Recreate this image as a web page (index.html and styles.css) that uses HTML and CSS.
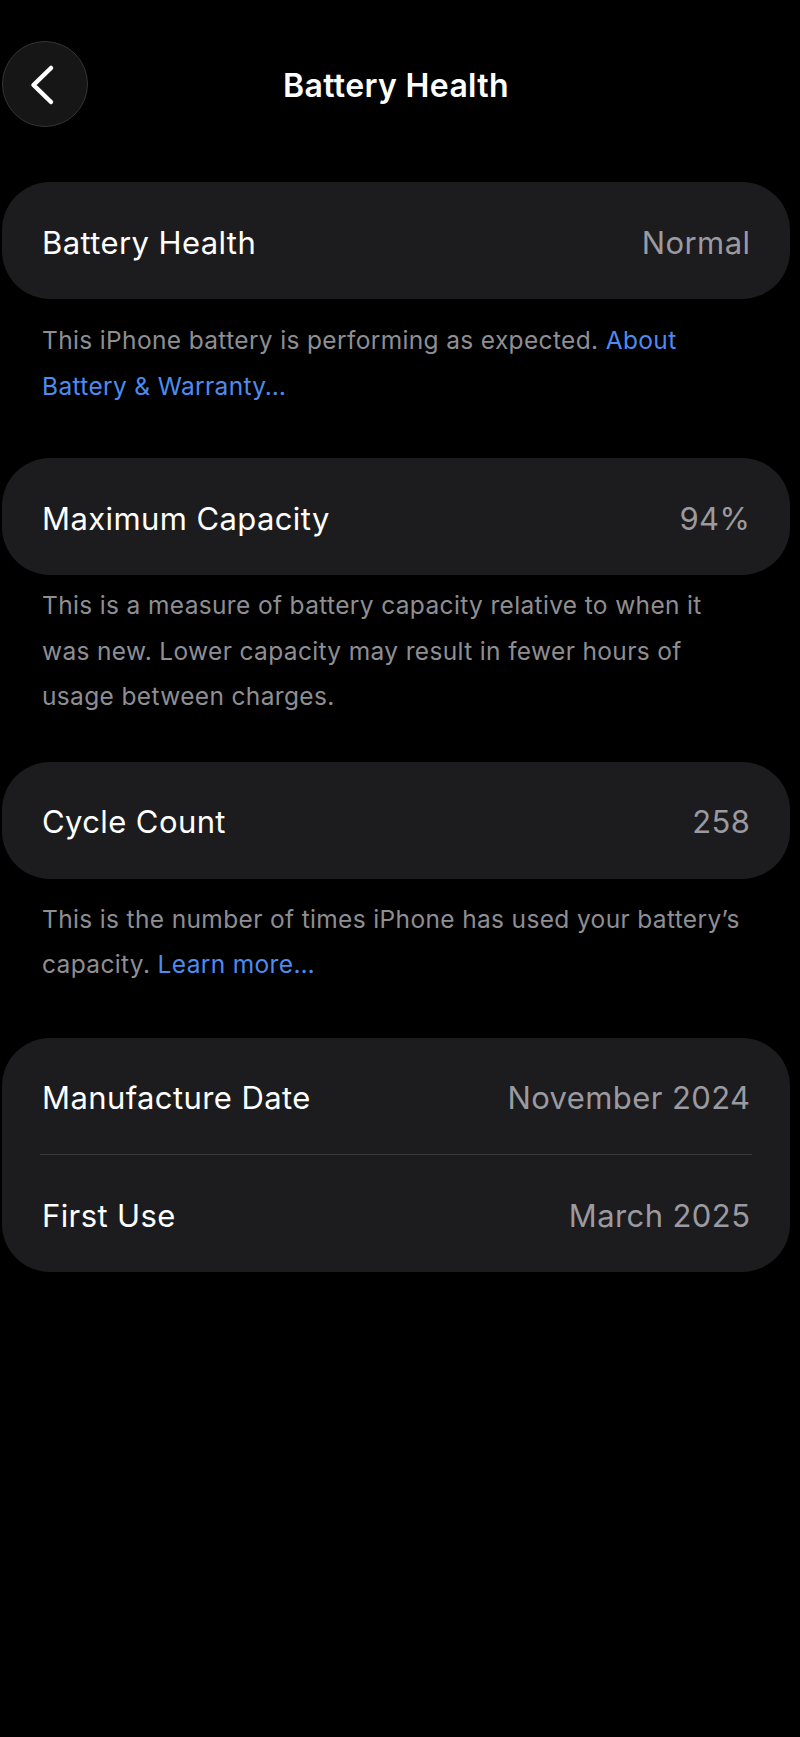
FILE: index.html
```html
<!DOCTYPE html>
<html lang="en">
<head>
<meta charset="utf-8">
<title>Battery Health</title>
<link rel="stylesheet" href="styles.css">
</head>
<body>
<div class="screen">
  <header class="nav">
    <button class="back" aria-label="Back">
      <svg width="86" height="86" viewBox="0 0 86 86" aria-hidden="true">
        <path d="M49 27 L31.5 44 L49 61" fill="none" stroke="#ffffff" stroke-width="4.5" stroke-linecap="round" stroke-linejoin="round"/>
      </svg>
    </button>
    <h1 class="title">Battery Health</h1>
    <span class="spacer"></span>
  </header>

  <section class="card card-1">
    <div class="row"><span class="label">Battery Health</span><span class="value">Normal</span></div>
  </section>
  <p class="footer footer-1">This iPhone battery is performing as expected. <a class="link" href="#">About<br>Battery &amp; Warranty…</a></p>

  <section class="card card-2">
    <div class="row"><span class="label">Maximum Capacity</span><span class="value">94%</span></div>
  </section>
  <p class="footer footer-2">This is a measure of battery capacity relative to when it<br>was new. Lower capacity may result in fewer hours of<br>usage between charges.</p>

  <section class="card card-3">
    <div class="row"><span class="label">Cycle Count</span><span class="value">258</span></div>
  </section>
  <p class="footer footer-3">This is the number of times iPhone has used your battery’s<br>capacity. <a class="link" href="#">Learn more…</a></p>

  <section class="card card-4">
    <div class="row"><span class="label">Manufacture Date</span><span class="value">November 2024</span></div>
    <div class="sep"></div>
    <div class="row"><span class="label">First Use</span><span class="value">March 2025</span></div>
  </section>
</div>
</body>
</html>
```

FILE: styles.css
```css
* {
  box-sizing: border-box;
}

html, body {
  margin: 0;
  padding: 0;
  background: #000000;
}

body {
  font-family: Inter, "Noto Sans", "Liberation Sans", sans-serif;
  color: #ffffff;
  min-height: 1737px;
}

.screen {
  width: 788px;
  margin-left: 2px;
  padding-top: 40px;
}

.nav {
  display: grid;
  grid-template-columns: 86px 1fr 86px;
  align-items: center;
  height: 87px;
}

.back {
  width: 86px;
  height: 86px;
  padding: 0;
  margin: 0;
  border-radius: 50%;
  background: #161617;
  border: 1.5px solid #353537;
  display: flex;
  align-items: center;
  justify-content: center;
  cursor: pointer;
}

.back svg {
  display: block;
  margin: -1.5px;
}

.title {
  margin: 0;
  padding-top: 5px;
  text-align: center;
  font-size: 32px;
  font-weight: 600;
  letter-spacing: 0.35px;
  line-height: 40px;
  color: #ffffff;
}

.card {
  background: #1c1c1e;
  border-radius: 48px;
  padding: 0 40px;
}

.card-1 { margin-top: 55px; }
.card-2 { margin-top: 49px; }
.card-3 { margin-top: 42px; }
.card-4 { margin-top: 50px; }

.row {
  height: 117px;
  padding-top: 4px;
  display: flex;
  align-items: center;
  justify-content: space-between;
  font-size: 31px;
  line-height: 38px;
  letter-spacing: 0.4px;
}

.card-4 .row:first-child { height: 116px; }

.label {
  color: #ffffff;
}

.value {
  color: #9a9aa0;
  margin-right: -0.4px;
}

.sep {
  height: 1.5px;
  background: #3a3a3c;
  margin: 0 -2px;
}

.footer {
  margin: 0;
  padding: 0 30px 0 40px;
  font-size: 24.5px;
  line-height: 45.5px;
  color: #8e8e93;
  letter-spacing: 0.35px;
  white-space: nowrap;
}

.footer-1 { margin-top: 19px; }
.footer-2 { margin-top: 8px; }
.footer-3 { margin-top: 18px; }

.link {
  color: #4d8bf0;
  text-decoration: none;
}
```
